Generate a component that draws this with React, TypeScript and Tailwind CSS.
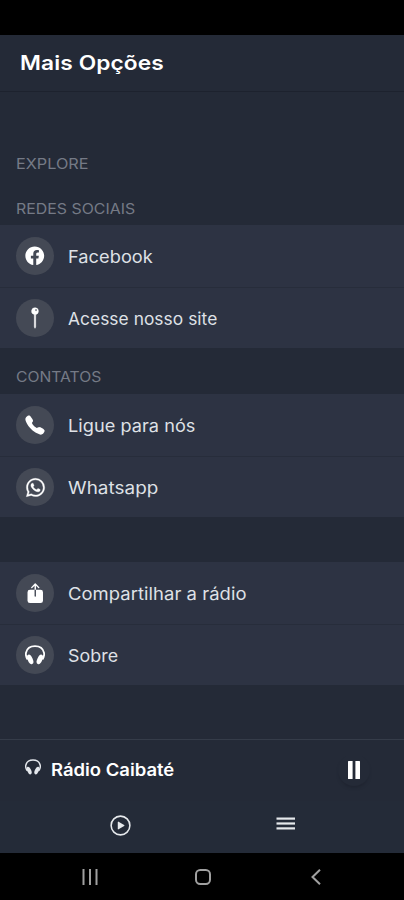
import type { ReactNode } from 'react';
import {
  IoCall,
  IoLogoFacebook,
  IoLogoWhatsapp,
  IoPin,
  IoPlayCircleOutline,
  IoShare,
} from 'react-icons/io5';

type Item = {
  label: string;
  icon: ReactNode;
  stretch: string;
};

function Headphones({ size }: { size: number }) {
  return (
    <svg width={size} height={size} viewBox="0 0 20 20" fill="none">
      <path
        d="M2.600 14.500C.8 11.800.6 9.700 1 7.800 1.900 3.700 5.500 1.200 10 1.200s8.100 2.500 9 6.600c.4 1.900.2 4-1.600 6.700"
        stroke="currentColor"
        strokeWidth="1.8"
      />
      <ellipse cx="5.200" cy="14.400" rx="2.500" ry="5.100" transform="rotate(-24 5.200 14.400)" fill="currentColor" />
      <ellipse cx="14.800" cy="14.400" rx="2.500" ry="5.100" transform="rotate(24 14.800 14.400)" fill="currentColor" />
    </svg>
  );
}

const social: Item[] = [
  { label: 'Facebook', icon: <IoLogoFacebook size={21.5} />, stretch: 'scale-x-[1.07]' },
  {
    label: 'Acesse nosso site',
    icon: <IoPin size={22} stroke="currentColor" strokeWidth={10} />,
    stretch: 'scale-x-[1.02]',
  },
];

const contacts: Item[] = [
  { label: 'Ligue para nós', icon: <IoCall size={22} />, stretch: 'scale-x-[1.065]' },
  {
    label: 'Whatsapp',
    icon: <IoLogoWhatsapp size={21} stroke="currentColor" strokeWidth={8} />,
    stretch: 'scale-x-[1.11]',
  },
];

const others: Item[] = [
  { label: 'Compartilhar a rádio', icon: <IoShare size={22.5} />, stretch: 'scale-x-[1.083]' },
  { label: 'Sobre', icon: <Headphones size={20} />, stretch: 'scale-x-[1.05]' },
];

function List({ items }: { items: Item[] }) {
  return (
    <ul className="bg-[#2d3343]">
      {items.map((item, i) => (
        <li
          key={item.label}
          className={`flex items-center gap-[15px] px-4 ${i === 0 ? 'h-[62px]' : 'h-[61px] border-t border-[#272d3b]'}`}
        >
          <span className="flex size-[38px] shrink-0 items-center justify-center rounded-full bg-[#444955] text-white">
            {item.icon}
          </span>
          <span
            className={`-ml-px origin-left pt-0.5 text-[17px] leading-6 tracking-[0.05px] whitespace-nowrap text-[#dfe1e6] ${item.stretch}`}
          >
            {item.label}
          </span>
        </li>
      ))}
    </ul>
  );
}

function SectionTitle({ children, stretch }: { children: ReactNode; stretch: string }) {
  return (
    <h2 className="flex h-[45px] items-center px-4 pt-3 text-[14px] text-[#757a86]">
      <span className={`origin-left ${stretch}`}>{children}</span>
    </h2>
  );
}

export default function App() {
  return (
    <div className="flex h-[900px] w-[404px] flex-col overflow-hidden bg-[#242a37] font-['Inter',sans-serif]">
      {/* Status bar */}
      <div className="h-[35px] shrink-0 bg-black" />

      <header className="flex h-[57px] shrink-0 items-center border-b border-[#1d222e] pl-5">
        <h1 className="origin-left scale-x-[1.135] text-[20px] font-semibold tracking-[0.1px] text-white">
          Mais Opções
        </h1>
      </header>

      <main className="flex-1 pt-[43px]">
        <SectionTitle stretch="scale-x-[1.16]">EXPLORE</SectionTitle>
        <SectionTitle stretch="scale-x-[1.135]">REDES SOCIAIS</SectionTitle>
        <List items={social} />
        <SectionTitle stretch="scale-x-[1.12]">CONTATOS</SectionTitle>
        <div className="pt-px">
          <List items={contacts} />
        </div>
        <div className="h-[45px]" />
        <List items={others} />
      </main>

      {/* Mini player */}
      <div className="flex h-[62px] shrink-0 items-center border-t border-[#353c49] pr-[34px] pl-[25px] text-white">
        <div className="mb-[7px] text-[#e4e7ec]">
          <Headphones size={16} />
        </div>
        <p className="ml-[10px] origin-left scale-x-[1.085] text-[17px] font-semibold whitespace-nowrap">
          Rádio Caibaté
        </p>
        <button
          type="button"
          aria-label="Pausar"
          className="mb-0.5 ml-auto flex size-8 items-center justify-center rounded-full shadow-[0_3px_3px_-1px_#1f2430]"
        >
          <svg width="12" height="18" viewBox="0 0 12 18" fill="currentColor">
            <rect x="0" y="0" width="4.600" height="18" rx="0.500" />
            <rect x="7.400" y="0" width="4.600" height="18" rx="0.500" />
          </svg>
        </button>
      </div>

      {/* Tabs */}
      <nav className="flex h-[52px] shrink-0 justify-center bg-[#242b38] text-[#e6e9ec]">
        <div className="flex w-[165px] justify-center pt-3 pl-px">
          <IoPlayCircleOutline size={25} />
        </div>
        <div className="flex w-[165px] justify-center pt-4 pl-0.5">
          <svg width="20" height="14" viewBox="0 0 20 14" fill="currentColor">
            <rect x="0.500" y="0.500" width="18.500" height="2.200" />
            <rect x="0.500" y="5.400" width="18.500" height="2.200" />
            <rect x="0.500" y="10.300" width="18.500" height="2.200" />
          </svg>
        </div>
      </nav>

      {/* Android navigation */}
      <div className="flex h-[47px] shrink-0 items-center justify-center gap-[97px] bg-black pl-[2px] text-[#a0a0a0]">
        <svg width="16" height="16" viewBox="0 0 16 16" stroke="currentColor" strokeWidth="2">
          <path d="M1.500 0v16M8 0v16M14.500 0v16" />
        </svg>
        <svg width="16" height="16" viewBox="0 0 16 16" fill="none" stroke="currentColor" strokeWidth="2">
          <rect x="1" y="1" width="14" height="14" rx="4.200" />
        </svg>
        <svg width="16" height="16" viewBox="0 0 16 16" fill="none" stroke="currentColor" strokeWidth="2">
          <path d="M12 .8 4.500 8l7.500 7.200" />
        </svg>
      </div>
    </div>
  );
}
